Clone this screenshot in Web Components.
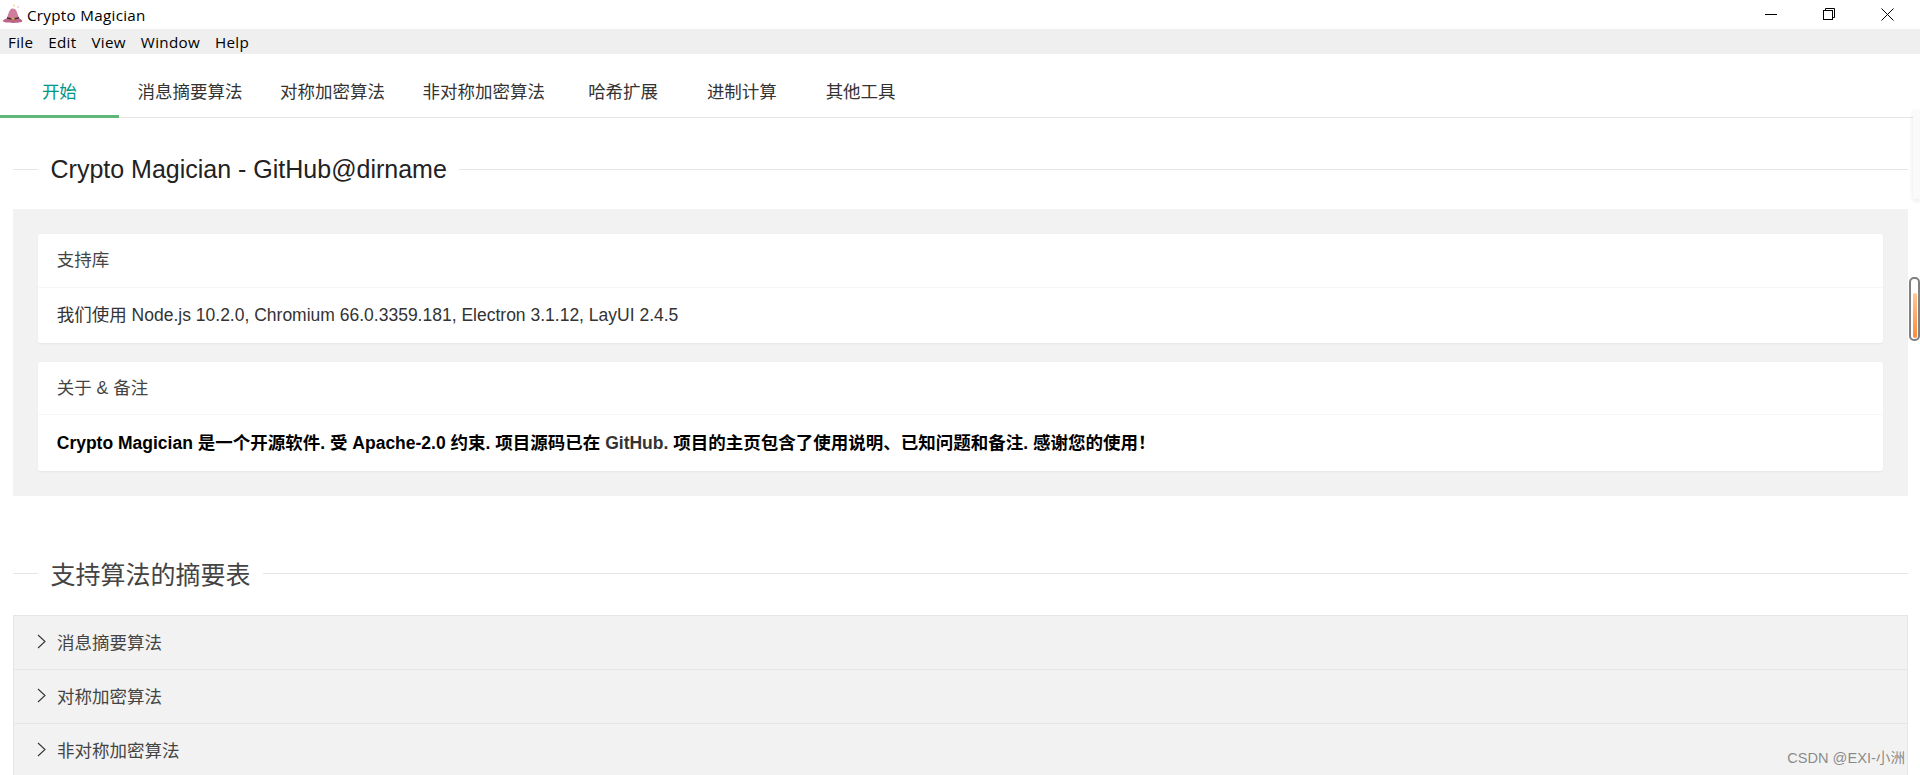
<!DOCTYPE html>
<html lang="zh">
<head>
<meta charset="utf-8">
<title>Crypto Magician</title>
<style>
  html, body { margin: 0; height: 775px; overflow: hidden; background: #fff; }
  body {
    position: relative;
    font-family: "Liberation Sans", "Noto Sans CJK SC", sans-serif;
    font-size: 17.5px;
    color: #333;
  }
  a { color: #333; text-decoration: none; }
  .gap { display: block; height: 18.75px; }
</style>
</head>
<body>
<template id="title-bar-tpl">
  <style>
    :host {
      display: flex;
      align-items: center;
      height: 29px;
      background: #fff;
      font-family: "Open Sans", "Noto Sans", sans-serif;
      font-size: 15.2px;
      letter-spacing: .3px;
      color: #000;
    }
    .hat { margin: 0 4px 0 2px; flex: none; }
    .name { flex: 1; }
    .ctl { display: flex; gap: 46px; margin-right: 26px; }
    svg { display: block; }
  </style>
  <svg class="hat" width="21" height="21" viewBox="0 0 21 21">
    <circle cx="12" cy="1.500" r="1" fill="#f3d98a"/>
    <circle cx="16" cy="3" r=".8" fill="#e8a8c0"/>
    <path d="M5 14C6.500 10 7 6.500 9 5C10.500 4 13 4.500 14.500 7L17 14Z" fill="#cf7d9c"/>
    <path d="M.5 17C2 15.500 3.500 15 5 14C8 15.500 13 15.500 17 14C18.500 15 20 16 20.500 17.200C18 19.500 3 19.500 .5 17Z" fill="#bd6586"/>
    <path d="M5 13C8 14.500 13 14.500 17 13V14.500C13 16 8 16 5 14.500Z" fill="#4a2a2c"/>
    <rect x="9.500" y="14" width="3" height="1.600" fill="#e5b84a"/>
  </svg>
  <span class="name"><slot></slot></span>
  <div class="ctl">
    <svg width="12" height="12" viewBox="0 0 12 12"><path d="M0 6.500H12" stroke="#000"/></svg>
    <svg width="12" height="12" viewBox="0 0 12 12" fill="none" stroke="#000"><rect x=".5" y="2.500" width="9" height="9"/><path d="M2.500 2.500V.5H11.500V9.500H9.500"/></svg>
    <svg width="13" height="13" viewBox="0 0 13 13" fill="none" stroke="#000"><path d="M.5 .5L12.500 12.500M12.500 .5L.5 12.500"/></svg>
  </div>
</template>

<template id="menu-bar-tpl">
  <style>
    :host {
      display: flex;
      align-items: center;
      gap: 15px;
      height: 25px;
      padding-left: 8px;
      background: #efefef;
      font-family: "Open Sans", "Noto Sans", sans-serif;
      font-size: 15.2px;
      letter-spacing: .3px;
      color: #000;
    }
  </style>
  <slot></slot>
</template>

<template id="tab-bar-tpl">
  <style>
    :host {
      display: flex;
      height: 63px;
      border-bottom: 1px solid #e6e6e6;
    }
  </style>
  <slot></slot>
</template>

<template id="tab-item-tpl">
  <style>
    :host {
      display: block;
      box-sizing: border-box;
      min-width: 118.75px;
      height: 64px;
      padding: 0 18.75px;
      line-height: 76px;
      text-align: center;
      font-size: 17.5px;
      color: #333;
    }
    :host([active]) { color: #009688; border-bottom: 3px solid #5fb878; }
  </style>
  <slot></slot>
</template>

<template id="field-title-tpl">
  <style>
    :host {
      display: flex;
      align-items: center;
      height: 40px;
      margin: 0 12px 0 13px;
      font-size: 25px;
      color: #222;
    }
    :host::before { content: ""; width: 25px; height: 1px; background: #e6e6e6; }
    :host::after { content: ""; flex: 1; height: 1px; background: #e6e6e6; }
    span { padding: 0 12.5px; }
  </style>
  <span><slot></slot></span>
</template>

<template id="card-panel-tpl">
  <style>
    :host {
      display: block;
      margin: 20px 12px 0 13px;
      padding: 25px;
      background: #f2f2f2;
    }
  </style>
  <slot></slot>
</template>

<template id="info-card-tpl">
  <style>
    :host {
      display: block;
      background: #fff;
      border-radius: 2.5px;
      box-shadow: 0 1px 2px rgba(0, 0, 0, .05);
    }
    header {
      height: 52.5px;
      line-height: 52.5px;
      padding: 0 18.75px;
      border-bottom: 1px solid #f6f6f6;
      color: #444;
    }
    div { padding: 12.5px 18.75px; line-height: 30.5px; }
  </style>
  <header><slot name="title"></slot></header>
  <div><slot></slot></div>
</template>

<template id="collapse-list-tpl">
  <style>
    :host {
      display: block;
      margin: 21.5px 12px 0 13px;
      border: 1px solid #e6e6e6;
      border-bottom: 0;
    }
  </style>
  <slot></slot>
</template>

<template id="collapse-item-tpl">
  <style>
    :host {
      display: flex;
      align-items: center;
      box-sizing: border-box;
      height: 54px;
      padding: 0 0 2px 23px;
      background: #f2f2f2;
      border-bottom: 1px solid #e6e6e6;
      color: #444;
    }
    svg { margin-right: 11px; flex: none; }
  </style>
  <svg width="9" height="15" viewBox="0 0 9 15" fill="none" stroke="#333" stroke-width="1.100"><path d="M1 1L8 7.500L1 14"/></svg>
  <slot></slot>
</template>

<template id="side-handle-tpl">
  <style>
    :host {
      position: absolute;
      top: 110px;
      right: 0;
      width: 7px;
      height: 89px;
      background: #fafafa;
      border-radius: 3px 0 0 3px;
      box-shadow: 0 2px 5px rgba(0, 0, 0, .1);
    }
  </style>
</template>

<template id="scroll-thumb-tpl">
  <style>
    :host {
      position: absolute;
      top: 277px;
      left: 1909px;
      box-sizing: border-box;
      width: 11px;
      height: 64px;
      border: 2px solid #808080;
      border-radius: 5px;
      background: #fff;
    }
    div {
      width: 4px;
      height: 45px;
      margin: 14px 0 0 2px;
      border-radius: 2px;
      background: linear-gradient(#ffc994, #ff8a3c);
    }
  </style>
  <div></div>
</template>

<template id="water-mark-tpl">
  <style>
    :host {
      position: absolute;
      top: 748px;
      right: 15px;
      font-size: 14.6px;
      line-height: 20px;
      color: rgba(90, 90, 90, .7);
    }
  </style>
  <slot></slot>
</template>

<title-bar>Crypto Magician</title-bar>
<menu-bar>
  <span>File</span><span>Edit</span><span>View</span><span>Window</span><span>Help</span>
</menu-bar>
<tab-bar>
  <tab-item active>开始</tab-item>
  <tab-item>消息摘要算法</tab-item>
  <tab-item>对称加密算法</tab-item>
  <tab-item>非对称加密算法</tab-item>
  <tab-item>哈希扩展</tab-item>
  <tab-item>进制计算</tab-item>
  <tab-item>其他工具</tab-item>
</tab-bar>
<field-title style="margin-top:31px">Crypto Magician - GitHub@dirname</field-title>
<card-panel>
  <info-card>
    <span slot="title">支持库</span>
    我们使用 Node.js 10.2.0, Chromium 66.0.3359.181, Electron 3.1.12, LayUI 2.4.5
  </info-card>
  <span class="gap"></span>
  <info-card>
    <span slot="title">关于 &amp; 备注</span>
    <b style="color:#000">Crypto Magician 是一个开源软件. 受 Apache-2.0 约束. 项目源码已在 <a href="#">GitHub.</a> 项目的主页包含了使用说明、已知问题和备注. 感谢您的使用！</b>
  </info-card>
</card-panel>
<field-title style="margin-top:57.5px;color:#444">支持算法的摘要表</field-title>
<collapse-list>
  <collapse-item>消息摘要算法</collapse-item>
  <collapse-item>对称加密算法</collapse-item>
  <collapse-item>非对称加密算法</collapse-item>
</collapse-list>
<side-handle></side-handle>
<scroll-thumb></scroll-thumb>
<water-mark>CSDN @EXI-小洲</water-mark>

<script>
  // every element here is only a template + shadow root, so one factory is enough
  function register(tag) {
    customElements.define(tag, class extends HTMLElement {
      constructor() {
        super();
        const tpl = document.getElementById(tag + "-tpl");
        this.attachShadow({ mode: "open" }).appendChild(tpl.content.cloneNode(true));
      }
    });
  }

  ["title-bar", "menu-bar", "tab-bar", "tab-item", "field-title", "card-panel",
   "info-card", "collapse-list", "collapse-item", "side-handle", "scroll-thumb",
   "water-mark"].forEach(register);
</script>
</body>
</html>
